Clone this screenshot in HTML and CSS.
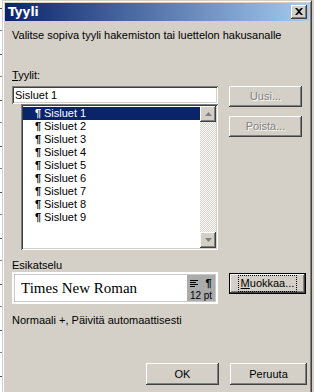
FILE: index.html
```html
<!DOCTYPE html>
<html>
<head>
<meta charset="utf-8">
<link rel="stylesheet" href="styles.css">
</head>
<body>
<div class="strip"></div>
<div class="dialog">
  <div class="titlebar">
    <span class="title">Tyyli</span>
    <span class="close"><svg width="8" height="7" viewBox="0 0 8 7"><path d="M0 0h2l2 2 2-2h2L5 3.5 8 7H6L4 5 2 7H0l3-3.5z" fill="#000"/></svg></span>
  </div>
  <div class="content">
    <div class="desc">Valitse sopiva tyyli hakemiston tai luettelon hakusanalle</div>
    <div class="main">
      <div class="left">
        <div class="label"><u>T</u>yylit:</div>
        <div class="input">Sisluet 1</div>
        <div class="list">
          <div class="rows">
            <div class="row sel"><span class="pil">¶</span>Sisluet 1</div>
            <div class="row"><span class="pil">¶</span>Sisluet 2</div>
            <div class="row"><span class="pil">¶</span>Sisluet 3</div>
            <div class="row"><span class="pil">¶</span>Sisluet 4</div>
            <div class="row"><span class="pil">¶</span>Sisluet 5</div>
            <div class="row"><span class="pil">¶</span>Sisluet 6</div>
            <div class="row"><span class="pil">¶</span>Sisluet 7</div>
            <div class="row"><span class="pil">¶</span>Sisluet 8</div>
            <div class="row"><span class="pil">¶</span>Sisluet 9</div>
          </div>
          <div class="scroll">
            <div class="sbtn"><svg width="7" height="4" viewBox="0 0 7 4"><path d="M3.5 0L7 4H0z" fill="#808080"/></svg></div>
            <div class="track"></div>
            <div class="sbtn"><svg width="7" height="4" viewBox="0 0 7 4"><path d="M0 0h7L3.5 4z" fill="#808080"/></svg></div>
          </div>
        </div>
        <div class="label2">Esikatselu</div>
        <div class="preview">
          <div class="pv-text">Times New Roman</div>
          <div class="pv-side">
            <div class="pv-icons">
              <svg width="8" height="7" viewBox="0 0 8 7"><path d="M0 0.5h8M0 2.5h6M0 4.5h8M0 6.5h5" stroke="#000" stroke-width="1"/></svg>
              <span class="pil2">¶</span>
            </div>
            <div class="pv-pt">12 pt</div>
          </div>
        </div>
      </div>
      <div class="right">
        <div class="btn dis b-uusi">Uusi...</div>
        <div class="btn dis b-poista">Poista...</div>
        <div class="btn focus b-muok"><span class="focusrect"><u>M</u>uokkaa...</span></div>
      </div>
    </div>
    <div class="summary">Normaali +, Päivitä automaattisesti</div>
    <div class="footer">
      <div class="btn b-ok">OK</div>
      <div class="btn b-cancel">Peruuta</div>
    </div>
  </div>
</div>
</body>
</html>
```
FILE: styles.css
```css
* { box-sizing: border-box; }
html, body { margin: 0; padding: 0; }
body {
  width: 314px;
  height: 392px;
  overflow: hidden;
  display: flex;
  background: #D4D0C8;
  font-family: "Liberation Sans", Arial, sans-serif;
  font-size: 11px;
  color: #000;
}
.strip {
  width: 2px;
  flex: none;
  background:
    repeating-linear-gradient(to bottom, #fff 0 8px, #555 8px 9px, #fff 9px 30px, #888 30px 31px, #fff 31px 46px);
}
.dialog {
  width: 310px;
  flex: none;
  height: 392px;
  border-left: 1px solid #D4D0C8;
  border-top: 1px solid #D4D0C8;
  border-right: 1px solid #404040;
  box-shadow: inset 1px 1px #fff, inset -1px 0 #808080;
  padding: 2px 2px 0 2px;
  background: #D4D0C8;
}
.titlebar {
  height: 18px;
  background: linear-gradient(to right, #0A246A, #A6CAF0);
  display: flex;
  align-items: center;
  justify-content: space-between;
  padding: 0 2px 0 3px;
}
.title {
  color: #fff;
  font-weight: bold;
  font-size: 12px;
  font-family: "DejaVu Sans", sans-serif;
}
.close {
  width: 16px;
  height: 14px;
  background: #D4D0C8;
  box-shadow: inset -1px -1px #404040, inset 1px 1px #fff, inset -2px -2px #808080;
  display: flex;
  align-items: center;
  justify-content: center;
  padding-bottom: 1px;
}
.content {
  padding: 0 0 0 7px;
}
.desc {
  margin-top: 8px;
  line-height: 13px;
  height: 13px;
}
.main {
  display: flex;
  gap: 11px;
  margin-top: 27px;
}
.left {
  width: 206px;
  display: flex;
  flex-direction: column;
}
.label, .label2 {
  line-height: 13px;
  height: 13px;
}
.input {
  margin-top: 4px;
  height: 18px;
  background: #fff;
  box-shadow: inset 1px 1px #808080, inset -1px -1px #fff, inset 2px 2px #404040, inset -2px -2px #D4D0C8;
  padding: 3px 0 0 3px;
  line-height: 13px;
}
.list {
  margin-left: 9px;
  height: 146px;
  background: #fff;
  display: flex;
  padding: 2px 0 2px 2px;
  box-shadow: inset 1px 1px #808080, inset -1px -1px #fff, inset 2px 2px #404040, inset -2px -2px #D4D0C8;
}
.rows {
  flex: 1;
  padding-top: 1px;
}
.row {
  height: 13px;
  line-height: 13px;
  padding-left: 12px;
  white-space: nowrap;
}
.row.sel {
  background: #0A246A;
  color: #fff;
}
.pil {
  display: inline-block;
  width: 9px;
  font-weight: bold;
}
.scroll {
  width: 16px;
  margin-right: 2px;
  display: flex;
  flex-direction: column;
}
.sbtn {
  height: 16px;
  background: #D4D0C8;
  box-shadow: inset -1px -1px #404040, inset 1px 1px #fff, inset -2px -2px #808080, inset 2px 2px #D4D0C8;
  display: flex;
  align-items: center;
  justify-content: center;
}
.track {
  flex: 1;
  background: repeating-conic-gradient(#D4D0C8 0 25%, #fff 0 50%) 0 0 / 2px 2px;
}
.label2 {
  margin-top: 9px;
}
.preview {
  height: 32px;
  background: #fff;
  border: 1px solid #fff;
  box-shadow: inset 0 0 0 1px #fff, inset 0 0 0 2px #c8c8c8;
  display: flex;
  padding: 2px 2px 2px 2px;
}
.pv-text {
  flex: 1;
  font-family: "Liberation Serif", "Times New Roman", serif;
  font-size: 15px;
  line-height: 26px;
  padding-left: 6px;
}
.pv-side {
  width: 28px;
  background: #ABABAB;
  display: flex;
  flex-direction: column;
  align-items: center;
}
.pv-icons {
  display: flex;
  align-items: center;
  gap: 7px;
  height: 12px;
  margin-top: 2px;
}
.pil2 { font-weight: bold; font-size: 11px; line-height: 12px; }
.pv-pt {
  font-size: 10px;
  line-height: 11px;
  margin-top: 1px;
}
.right {
  width: 77px;
  display: flex;
  flex-direction: column;
  align-items: flex-start;
}
.btn {
  height: 21px;
  background: #D4D0C8;
  box-shadow: inset -1px -1px #404040, inset 1px 1px #fff, inset -2px -2px #808080, inset 2px 2px #D4D0C8;
  display: flex;
  align-items: center;
  justify-content: center;
  line-height: 13px;
}
.btn.dis {
  color: #808080;
  text-shadow: 1px 1px #fff;
}
.b-uusi { width: 73px; margin-top: 17px; }
.b-poista { width: 73px; margin-top: 9px; }
.b-muok {
  width: 77px;
  margin-top: 136px;
  border: 1px solid #000;
}
.focusrect {
  outline: 1px dotted #000;
  outline-offset: 1px;
  padding: 0 1px;
}
.summary {
  margin-top: 10px;
  line-height: 13px;
  height: 13px;
}
.footer {
  display: flex;
  justify-content: flex-end;
  gap: 11px;
  margin-top: 36px;
  padding-right: 2px;
}
.b-ok { width: 73px; height: 22px; }
.b-cancel { width: 77px; height: 22px; }
```
